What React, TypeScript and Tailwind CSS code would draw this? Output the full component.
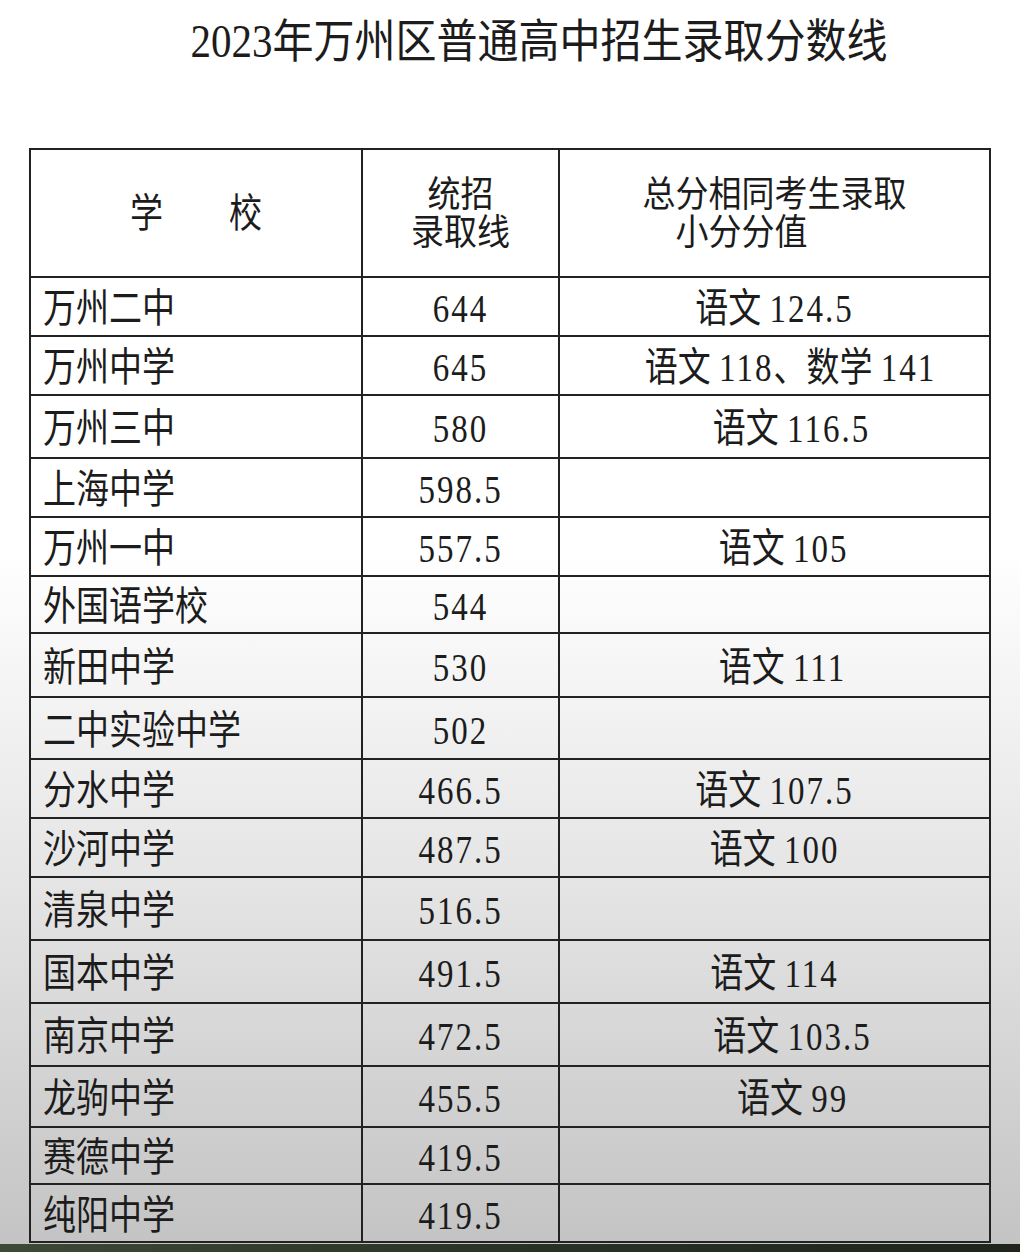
import type { FC, ReactNode } from 'react';

type Row = {
    school: string;
    score: string;
    tie: string;
    h: string;
    shift: string;
};

const rows: Row[] = [
    { school: '万州二中', score: '644', tie: '语文 124.5', h: 'h-[59px]', shift: '' },
    { school: '万州中学', score: '645', tie: '语文 118、数学 141', h: 'h-[59px]', shift: 'pl-[32px]' },
    { school: '万州三中', score: '580', tie: '语文 116.5', h: 'h-[63px]', shift: 'pl-[34px]' },
    { school: '上海中学', score: '598.5', tie: '', h: 'h-[59px]', shift: '' },
    { school: '万州一中', score: '557.5', tie: '语文 105', h: 'h-[59px]', shift: 'pl-[18px]' },
    { school: '外国语学校', score: '544', tie: '', h: 'h-[57px]', shift: '' },
    { school: '新田中学', score: '530', tie: '语文 111', h: 'h-[64px]', shift: 'pl-[16px]' },
    { school: '二中实验中学', score: '502', tie: '', h: 'h-[62px]', shift: '' },
    { school: '分水中学', score: '466.5', tie: '语文 107.5', h: 'h-[59px]', shift: '' },
    { school: '沙河中学', score: '487.5', tie: '语文 100', h: 'h-[59px]', shift: '' },
    { school: '清泉中学', score: '516.5', tie: '', h: 'h-[63px]', shift: '' },
    { school: '国本中学', score: '491.5', tie: '语文 114', h: 'h-[63px]', shift: '' },
    { school: '南京中学', score: '472.5', tie: '语文 103.5', h: 'h-[63px]', shift: 'pl-[36px]' },
    { school: '龙驹中学', score: '455.5', tie: '语文 99', h: 'h-[61px]', shift: 'pl-[36px]' },
    { school: '赛德中学', score: '419.5', tie: '', h: 'h-[57px]', shift: '' },
    { school: '纯阳中学', score: '419.5', tie: '', h: 'h-[58px]', shift: '' },
];

const font = 'font-["Liberation_Serif","Noto_Sans_CJK_SC",serif]';

// 原图文字略微被纵向拉伸，数字间距也稍宽
const Txt: FC<{ children: ReactNode; y?: string }> = ({ children, y = 'scale-y-[1.2]' }) => (
    <span className={`inline-block whitespace-pre ${y}`}>{children}</span>
);

const Num: FC<{ text: string }> = ({ text }) => (
    <>
        {text.split(/([0-9.]+)/).map((part, i) =>
            /^[0-9.]+$/.test(part) ? (
                <span key={i} className="tracking-[2px]">
                    {part}
                </span>
            ) : (
                <span key={i}>{part}</span>
            ),
        )}
    </>
);

export default function App() {
    return (
        <div
            className={`flex h-[1252px] w-[1020px] flex-col overflow-hidden bg-gradient-to-b from-white from-[44%] via-[#e3e3e3] via-[72%] to-[#c3c3c3] text-[#1c1c1c] ${font}`}
        >
            <h1 className="pl-[58px] pt-[20px] text-center text-[41px] font-normal leading-[42px]">
                <Txt y="scale-y-[1.12]">2023年万州区普通高中招生录取分数线</Txt>
            </h1>

            <table className="ml-[29px] mt-[86px] w-[962px] table-fixed border-collapse border-2 border-[#222] text-[33px] leading-[37px]">
                <colgroup>
                    <col className="w-[332px]" />
                    <col className="w-[197px]" />
                    <col />
                </colgroup>
                <thead>
                    <tr className="h-[128px]">
                        <th className="border-2 border-[#222] pt-[2px] text-center font-normal">
                            <Txt>{'学\u3000\u3000校'}</Txt>
                        </th>
                        <th className="border-2 border-[#222] pt-[2px] text-center font-normal leading-[38px]">
                            <Txt y="scale-y-[1.1]">统招</Txt>
                            <br />
                            <Txt y="scale-y-[1.1]">录取线</Txt>
                        </th>
                        <th className="border-2 border-[#222] pt-[2px] text-center font-normal leading-[38px]">
                            <Txt y="scale-y-[1.1]">总分相同考生录取</Txt>
                            <br />
                            <span className="pr-[66px]">
                                <Txt y="scale-y-[1.1]">小分分值</Txt>
                            </span>
                        </th>
                    </tr>
                </thead>
                <tbody>
                    {rows.map((r) => (
                        <tr key={r.school} className={r.h}>
                            <td className="border-2 border-[#222] pl-[12px] pt-[6px]">
                                <Txt>{r.school}</Txt>
                            </td>
                            <td className="border-2 border-[#222] pt-[6px] text-center">
                                <Txt>
                                    <Num text={r.score} />
                                </Txt>
                            </td>
                            <td className={`border-2 border-[#222] pt-[6px] text-center ${r.shift}`}>
                                {r.tie && (
                                    <Txt>
                                        <Num text={r.tie} />
                                    </Txt>
                                )}
                            </td>
                        </tr>
                    ))}
                </tbody>
            </table>

            <div className="mt-auto h-[8px] bg-gradient-to-r from-[#3d4a35] via-[#2a3226] to-[#1f241c]" />
        </div>
    );
}
